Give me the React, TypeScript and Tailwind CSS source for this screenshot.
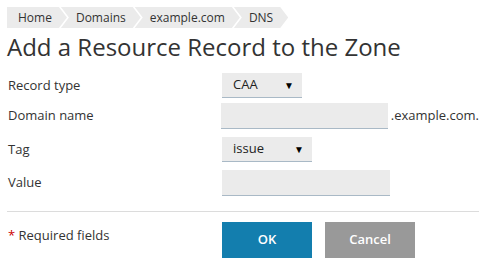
import React from 'react';

const crumbs = ['Home', 'Domains', 'example.com', 'DNS'];

function Select({ value, width }: { value: string; width: string }) {
  return (
    <div className={`${width} h-[25px] bg-[#ebebeb] border-b border-[#a9b9c6] flex items-center justify-between pl-[11px] pr-[8px] text-[13px] text-[#222]`}>
      <span>{value}</span>
      <span className="text-[10px] text-black">▼</span>
    </div>
  );
}

function Input() {
  return <div className="w-[168px] h-[26px] bg-[#ebebeb] border-b border-[#a9b9c6]" />;
}

export default function App() {
  return (
    <div className="w-[486px] h-[266px] bg-white px-[7px] pt-[7px] text-[#333] font-['Open_Sans',sans-serif] overflow-hidden">
      <div className="flex h-[21px]">
        {crumbs.map((c, i) => (
          <div
            key={c}
            className={
              i === 0
                ? 'h-full bg-[#ebebeb] flex items-center pl-[11px] pr-[15px] text-[12px] [clip-path:polygon(0_0,calc(100%_-_8px)_0,100%_50%,calc(100%_-_8px)_100%,0_100%)]'
                : 'h-full bg-[#ebebeb] flex items-center pl-[15px] pr-[15px] -ml-[6px] text-[12px] [clip-path:polygon(0_0,calc(100%_-_8px)_0,100%_50%,calc(100%_-_8px)_100%,0_100%,8px_50%)]'
            }
          >
            {c}
          </div>
        ))}
      </div>

      <h1 className="text-[24px] leading-[30px] mt-[4px] text-[#333]">Add a Resource Record to the Zone</h1>

      <div className="mt-[11px] text-[13px] pl-[1px]">
        <div className="flex items-center">
          <div className="w-[214px]">Record type</div>
          <Select value="CAA" width="w-[80px]" />
        </div>
        <div className="flex items-center mt-[5px]">
          <div className="w-[214px]">Domain name</div>
          <Input />
          <span className="ml-[3px]">.example.com.</span>
        </div>
        <div className="flex items-center mt-[8px]">
          <div className="w-[214px]">Tag</div>
          <Select value="issue" width="w-[90px]" />
        </div>
        <div className="flex items-center mt-[8px]">
          <div className="w-[214px]">Value</div>
          <Input />
        </div>
      </div>

      <div className="mt-[15px] border-t border-[#dcdcdc]" />

      <div className="flex mt-[10px] pl-[1px]">
        <div className="w-[214px] text-[13px] pt-[4px]">
          <span className="text-[#c00]">*</span> Required fields
        </div>
        <button className="w-[90px] h-[36px] bg-[#137eae] text-white text-[13px] font-semibold">OK</button>
        <button className="w-[90px] h-[36px] ml-[13px] bg-[#999999] text-white text-[13px] font-semibold">Cancel</button>
      </div>
    </div>
  );
}
